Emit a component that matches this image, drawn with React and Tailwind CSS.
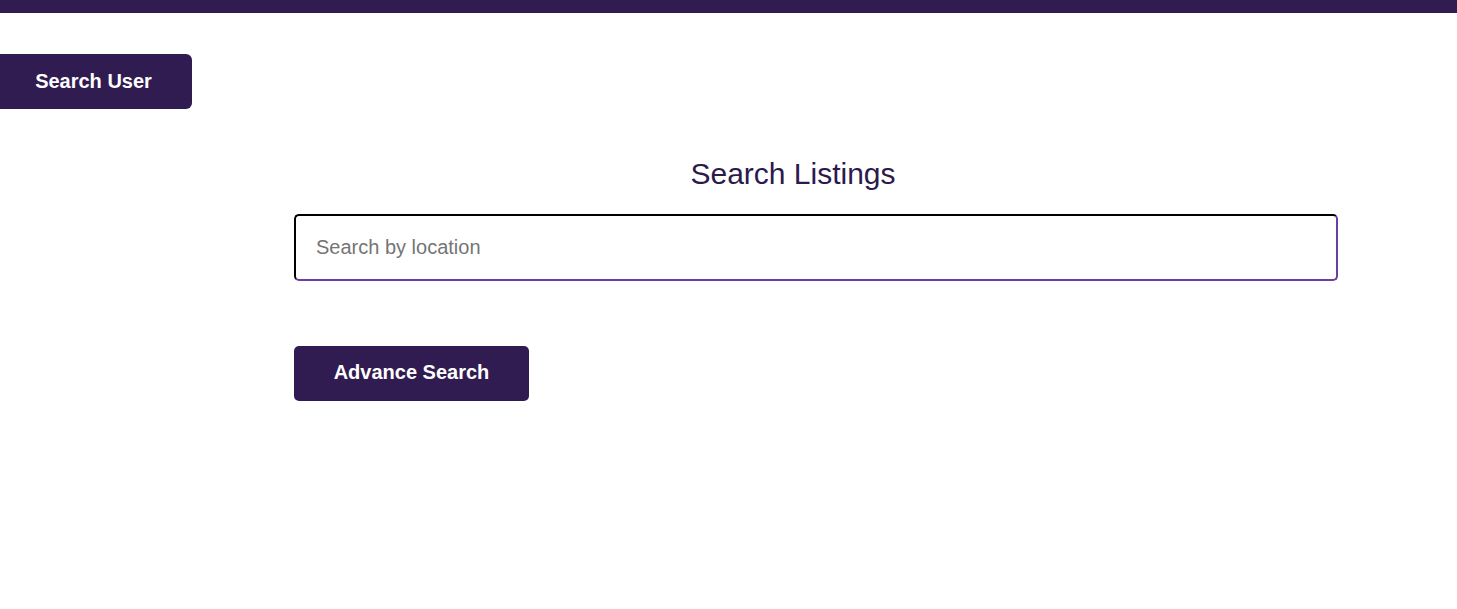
export default function App() {
  return (
    <div className="min-h-screen bg-white font-['Liberation_Sans',Arial,sans-serif]">
      <div className="h-[13px] bg-[#301c50]" />

      <div className="mt-[41px]">
        <button className="h-[55px] w-[192px] rounded-r-md bg-[#301c50] pr-[5px] pb-[2px] text-[20px] font-bold text-white">
          Search User
        </button>
      </div>

      <div className="ml-[294px] mt-[48px] w-[1044px]">
        <h2 className="pr-[46px] text-center text-[30px] leading-[34px] text-[#2d1a4d]">
          Search Listings
        </h2>
        <input
          type="text"
          placeholder="Search by location"
          className="mt-[23px] block h-[67px] w-full rounded-[5px] border-2 border-t-black border-l-black border-r-[#6a3fa3] border-b-[#6a3fa3] px-5 text-[20px] text-gray-800 placeholder:text-[#757575] outline-none"
        />
        <button className="mt-[65px] h-[55px] w-[235px] rounded-[5px] bg-[#301c50] pb-[3px] text-[20px] font-bold text-white">
          Advance Search
        </button>
      </div>
    </div>
  )
}
